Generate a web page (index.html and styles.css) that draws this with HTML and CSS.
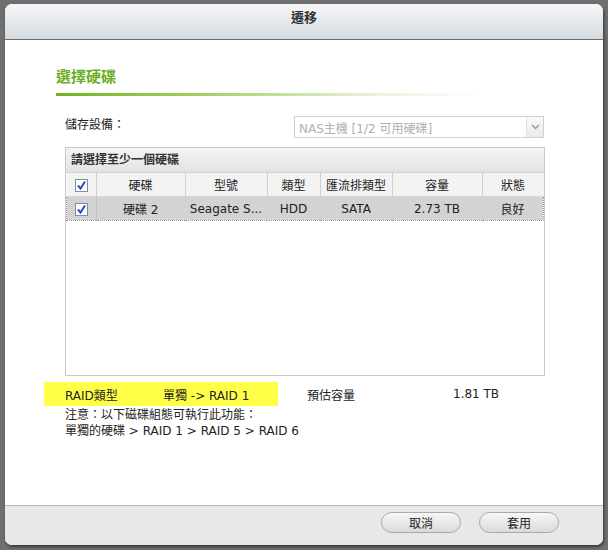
FILE: index.html
```html
<!DOCTYPE html>
<html lang="zh-Hant">
<head>
    <meta charset="UTF-8">
    <title>遷移</title>
    <link rel="stylesheet" href="styles.css">
</head>
<body>
    <div class="dialog">
        <div class="title-bar">遷移</div>
        <div class="content">
            <h2 class="section-title">選擇硬碟</h2>
            <div class="section-line"></div>

            <div class="device-row">
                <span class="device-label">儲存設備：</span>
                <div class="select">
                    <span class="select-text">NAS主機 [1/2 可用硬碟]</span>
                    <span class="select-arrow">
                        <svg width="9" height="6" viewBox="0 0 9 6"><path d="M1 1 L4.5 4.5 L8 1" fill="none" stroke="#999" stroke-width="1.5"/></svg>
                    </span>
                </div>
            </div>

            <div class="panel">
                <div class="panel-head">請選擇至少一個硬碟</div>
                <table class="disks">
                    <thead>
                        <tr>
                            <th class="c-check"><span class="check"></span></th>
                            <th class="c-disk">硬碟</th>
                            <th class="c-model">型號</th>
                            <th class="c-type">類型</th>
                            <th class="c-bus">匯流排類型</th>
                            <th class="c-size">容量</th>
                            <th class="c-state">狀態</th>
                        </tr>
                    </thead>
                    <tbody>
                        <tr class="selected">
                            <td><span class="check"></span></td>
                            <td>硬碟 2</td>
                            <td>Seagate S...</td>
                            <td>HDD</td>
                            <td>SATA</td>
                            <td>2.73 TB</td>
                            <td>良好</td>
                        </tr>
                    </tbody>
                </table>
            </div>

            <div class="raid-row">
                <div class="raid-highlight">
                    <span class="raid-label">RAID類型</span>
                    <span class="raid-value">單獨 -&gt; RAID 1</span>
                </div>
                <span class="cap-label">預估容量</span>
                <span class="cap-value">1.81 TB</span>
            </div>

            <div class="note">
                <div class="note-title">注意：以下磁碟組態可執行此功能：</div>
                <div>單獨的硬碟 &gt; RAID 1 &gt; RAID 5 &gt; RAID 6</div>
            </div>
        </div>
        <div class="footer">
            <button class="btn">取消</button>
            <button class="btn">套用</button>
        </div>
    </div>
</body>
</html>
```

FILE: styles.css
```css
html, body {
    margin: 0;
    height: 100%;
}
body {
    background-color: #6f6f6f;
    font-family: "DejaVu Sans", "Noto Sans CJK TC", sans-serif;
    font-size: 12px;
    color: #222;
    padding: 4px 5px 0 5px;
    box-sizing: border-box;
}
.dialog {
    width: 598px;
    height: 541px;
    background-color: #fff;
    border-radius: 7px;
    box-shadow: 1px 2px 3px rgba(0, 0, 0, 0.5);
    display: flex;
    flex-direction: column;
    overflow: hidden;
}
.title-bar {
    height: 36px;
    border-bottom: 1px solid #6a6a6a;
    background: linear-gradient(#f6f7f9, #d4dae0);
    text-align: center;
    font-weight: bold;
    font-size: 13px;
    color: #333;
    line-height: 16px;
    padding-top: 6px;
    box-sizing: border-box;
}
.content {
    flex: 1;
    padding-left: 51px;
    padding-right: 59px;
}
.section-title {
    margin: 28px 0 0 0;
    font-size: 15px;
    font-weight: bold;
    line-height: 18px;
    color: #6cae1f;
}
.section-line {
    margin-top: 7px;
    width: 430px;
    height: 3px;
    background: linear-gradient(to right, #6fb423 0%, #a5d06a 35%, rgba(220, 235, 200, 0.6) 75%, rgba(255, 255, 255, 0) 100%);
}
.device-row {
    margin-top: 20px;
    margin-left: 9px;
    display: flex;
    justify-content: space-between;
    align-items: flex-start;
}
.device-label {
    line-height: 16px;
    margin-top: 1px;
}
.select {
    width: 250px;
    height: 22px;
    border: 1px solid #cfcfcf;
    box-sizing: border-box;
    display: flex;
    align-items: center;
    justify-content: space-between;
    color: #b0b0b0;
}
.select-text {
    padding-left: 4px;
}
.select-arrow {
    width: 16px;
    height: 20px;
    border-left: 1px solid #e4e4e4;
    display: flex;
    align-items: center;
    justify-content: center;
    background: linear-gradient(#fafafa, #eaeaea);
}
.panel {
    margin-top: 9px;
    margin-left: 9px;
    width: 480px;
    height: 229px;
    border: 1px solid #c9c9c9;
    box-sizing: border-box;
}
.panel-head {
    height: 24px;
    line-height: 24px;
    padding-left: 5px;
    font-weight: bold;
    color: #333;
    background: linear-gradient(#f4f4f4, #e3e3e3);
    border-bottom: 1px solid #d2d2d2;
}
.disks {
    border-collapse: collapse;
    width: 478px;
    table-layout: fixed;
}
.disks th,
.disks td {
    height: 23px;
    padding: 0;
    text-align: center;
    font-weight: normal;
    white-space: nowrap;
    overflow: hidden;
}
.disks th {
    background-color: #f3f3f3;
    border-right: 1px solid #d0d0d0;
    border-bottom: 1px solid #d8d8d8;
}
.disks th:last-child {
    border-right: none;
}
.c-check { width: 29px; }
.c-disk { width: 88px; }
.c-model { width: 81px; }
.c-type { width: 52px; }
.c-bus { width: 71px; }
.c-size { width: 89px; }
.disks tr.selected td {
    background-color: #d3d3d3;
    border-top: 1px dotted #9a9a9a;
    border-bottom: 1px dotted #9a9a9a;
}
.disks tr.selected td:first-child {
    border-left: 1px dotted #9a9a9a;
    border-right: 1px solid #c4c4c4;
}
.disks tr.selected td:last-child {
    border-right: 1px dotted #9a9a9a;
}
.check {
    display: inline-block;
    width: 11px;
    height: 11px;
    border: 1px solid #7b8ea6;
    background: #fff url("data:image/svg+xml;utf8,<svg xmlns='http://www.w3.org/2000/svg' width='11' height='11'><path d='M2 5.5 L4.5 8.5 L9 1.5' fill='none' stroke='%232c4fb5' stroke-width='2'/></svg>") no-repeat center;
    vertical-align: middle;
}
.raid-row {
    margin-top: 6px;
    margin-left: -12px;
    display: flex;
    align-items: center;
    height: 24px;
}
.raid-highlight {
    width: 234px;
    height: 24px;
    background-color: #ffff47;
    display: flex;
    align-items: center;
}
.raid-label {
    margin-left: 21px;
    width: 98px;
}
.cap-label {
    margin-left: 29px;
    width: 146px;
}
.note {
    margin-top: 1px;
    margin-left: 9px;
    line-height: 16px;
}
.footer {
    height: 40px;
    border-top: 1px solid #b8b8b8;
    background-color: #e8e8e8;
    display: flex;
    justify-content: flex-end;
    align-items: flex-start;
    padding: 6px 44px 0 0;
    box-sizing: border-box;
    gap: 18px;
}
.btn {
    width: 80px;
    height: 21px;
    border: 1px solid #a9a9a9;
    border-radius: 11px;
    background: linear-gradient(#f7f7f7, #dadada);
    font-family: "DejaVu Sans", "Noto Sans CJK TC", sans-serif;
    font-size: 12px;
    color: #222;
    padding: 0;
}
```
